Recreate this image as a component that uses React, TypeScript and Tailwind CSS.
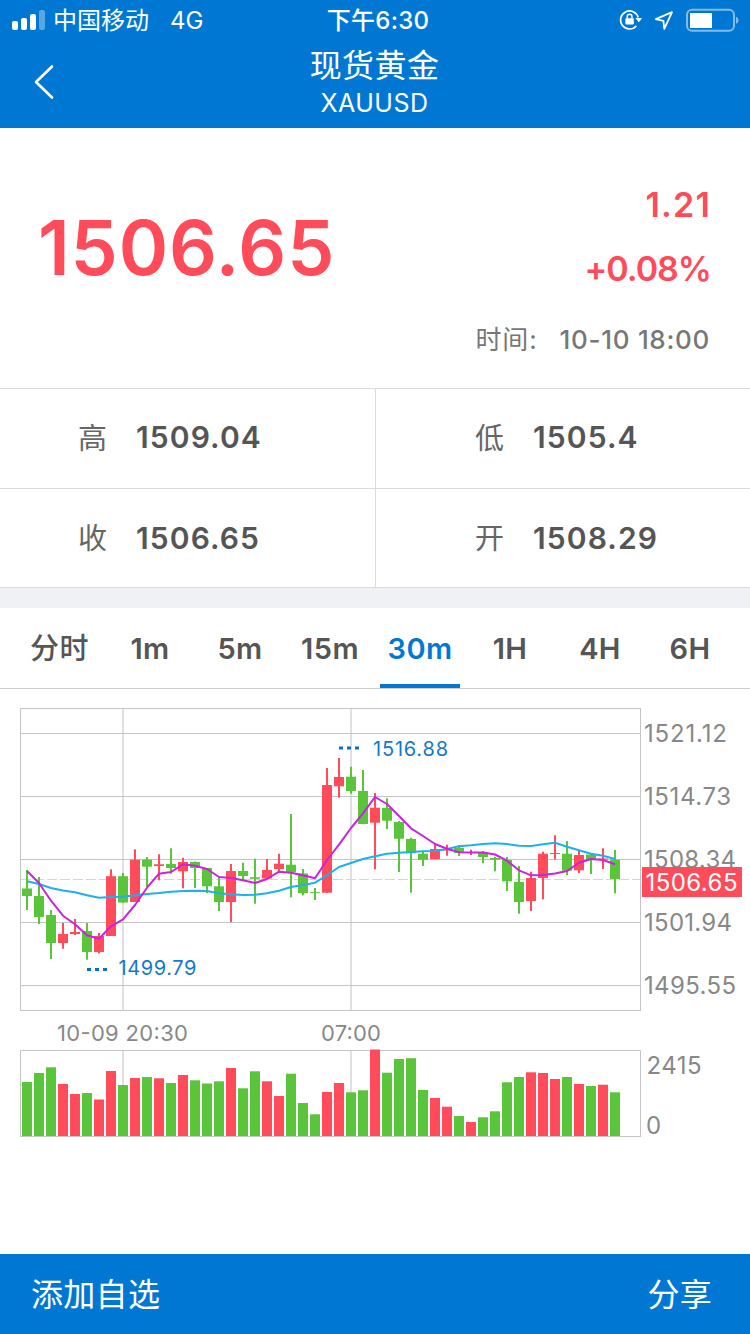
import clsx from 'clsx';

type Candle = {
  up: boolean;
  high: number;
  low: number;
  top: number;
  bottom: number;
  vol: number;
};

// [up, wick top, wick bottom, body top, body bottom, volume top]
const RAW: [number, number, number, number, number, number][] = [
  [0, 870, 910, 888.5, 896, 1082],
  [0, 877, 924, 896, 917, 1073],
  [0, 910, 959, 915, 943, 1067.3],
  [1, 923, 948.7, 934, 943, 1084],
  [1, 919, 935, 932, 934, 1094],
  [0, 923, 959.7, 931, 952, 1093],
  [1, 933, 953.3, 936, 952, 1099.5],
  [1, 869.3, 936, 876.2, 936, 1071],
  [0, 873, 903, 876.2, 902.5, 1085],
  [1, 849.3, 902, 859.7, 902, 1078],
  [0, 857, 887, 859.7, 866.7, 1077],
  [1, 854.3, 880.3, 864.3, 866, 1078.3],
  [0, 848.3, 873.7, 864, 868, 1083],
  [1, 857.7, 888.3, 862, 871.3, 1075],
  [0, 861.5, 888, 862, 868, 1080.3],
  [0, 868, 893, 868, 886.3, 1083.5],
  [0, 877.5, 911, 886.3, 902, 1081.3],
  [1, 864, 922, 871, 902, 1068],
  [0, 862.7, 881, 871, 876, 1088.3],
  [0, 858.7, 903.7, 877.2, 878.8, 1071.3],
  [1, 859, 879, 870, 878.5, 1081.3],
  [1, 853.7, 871, 863.7, 869, 1096],
  [0, 814, 897.3, 864.7, 872.3, 1073.7],
  [0, 869, 895.3, 873.5, 893, 1103],
  [0, 888, 900, 892, 892.8, 1114.3],
  [1, 768, 892.7, 785, 892.7, 1092],
  [1, 758, 797.7, 777, 786.3, 1083],
  [0, 766.7, 793.7, 776.7, 791, 1092.3],
  [0, 770, 824, 791, 824, 1090.3],
  [1, 793, 869.3, 807.7, 822.7, 1049.5],
  [0, 798.3, 829, 808, 820.7, 1072.7],
  [0, 821, 872, 822, 838.7, 1059],
  [0, 837.7, 892.7, 839, 853.3, 1058.2],
  [0, 850.7, 866, 853.7, 859.7, 1090],
  [1, 843.3, 859, 849, 859, 1098],
  [1, 844.7, 855.7, 849.5, 850.5, 1106.7],
  [0, 845.3, 856, 848, 853, 1116],
  [1, 849.7, 855, 852, 853, 1122],
  [0, 851, 863.3, 852.3, 857, 1117.3],
  [0, 857, 871.3, 858, 859.7, 1111.3],
  [0, 857, 891, 860, 881.3, 1082.3],
  [0, 866, 913.7, 882, 902, 1077],
  [1, 871.7, 911, 878, 901, 1072.3],
  [1, 851.7, 899.3, 853.7, 878, 1073],
  [1, 835.3, 859.3, 853, 854, 1079],
  [0, 841, 875, 853.7, 870.7, 1077],
  [1, 850, 873, 855, 870.3, 1084],
  [0, 853, 874, 854.5, 859.7, 1086],
  [1, 848.3, 869, 858.5, 859.5, 1084.7],
  [0, 850, 893.3, 859.7, 879, 1092.3],
];

const CANDLES: Candle[] = RAW.map(([up, high, low, top, bottom, vol]) => ({
  up: up === 1,
  high,
  low,
  top,
  bottom,
  vol,
}));

const MA_FAST = [
  871, 883, 900.7, 915.7, 924.3, 935.3, 938.7, 926.3, 919.3, 905, 887.7, 873.7, 872, 864.3, 865.7, 869, 877,
  878, 880.3, 883, 879, 871.7, 872.7, 875.3, 878.3, 860, 844.7, 828, 813.3, 797, 804, 816, 828.3, 836, 844,
  848.7, 852.3, 852.5, 852.5, 854.5, 860.7, 870.3, 875.3, 875, 873.5, 871, 862.7, 859, 860, 864.3,
];

const MA_SLOW = [
  881.3, 884, 888, 890.5, 892.3, 895.3, 897.7, 897, 896.7, 895.3, 894, 893, 891.7, 891, 890.7, 891, 893.3,
  894.3, 895, 894.7, 893.3, 890.7, 887, 885, 882.7, 875.3, 867, 863, 859, 856.3, 853.7, 852.7, 852, 851.3,
  851, 849, 846.3, 845.3, 844, 843.3, 844, 845.7, 846, 844.3, 842.7, 846.7, 850.3, 853.7, 855.7, 859,
];

const PRICE_TICKS = [
  { y: 733.5, label: '1521.12', width: 83 },
  { y: 796.5, label: '1514.73', width: 87 },
  { y: 859.5, label: '1508.34', width: 92 },
  { y: 922.5, label: '1501.94', width: 88 },
  { y: 985.5, label: '1495.55', width: 92 },
];

const TABS = ['分时', '1m', '5m', '15m', '30m', '1H', '4H', '6H'];

const STATS = [
  { label: '高', value: '1509.04' },
  { label: '低', value: '1505.4' },
  { label: '收', value: '1506.65' },
  { label: '开', value: '1508.29' },
];

const candleX = (i: number) => 27 + i * 12;
const toPoints = (ys: number[]) => ys.map((y, i) => `${candleX(i)},${y}`).join(' ');

function StatusBar() {
  return (
    <div className="flex h-10 items-center justify-between">
      <div className="flex w-[300px] items-center pl-3">
        <svg width="34" height="20" viewBox="0 0 34 20" fill="#fff">
          <rect x="0" y="11" width="6" height="9" rx="2" />
          <rect x="9" y="8" width="6" height="12" rx="2" />
          <rect x="18" y="4" width="6" height="16" rx="2" />
          <rect x="27" y="0" width="6" height="20" rx="2" opacity="0.35" />
        </svg>
        <span className="ml-[7px] pt-0.5 text-[24px]">中国移动</span>
        <span className="ml-[21px] pt-0.5 text-[24px]">4G</span>
      </div>
      <span className="pl-[6px] pt-0.5 text-[24px] font-medium tracking-[0.3px]">下午6:30</span>
      <div className="flex w-[300px] items-center justify-end pr-[10px]">
        <svg width="24" height="22" viewBox="0 0 24 22" fill="none" stroke="#fff" strokeWidth="1.7">
          <path d="M17.3 17A9 9 0 1 1 19.2 8.4" />
          <path d="M16.4 9h6.8l-3.4 4.2z" fill="#fff" stroke="none" />
          <rect x="6.4" y="9.2" width="8.4" height="6.2" rx="0.8" fill="#fff" stroke="none" />
          <path d="M8.2 9.5V7.7a2.4 2.4 0 0 1 4.8 0v1.8" strokeWidth="1.4" />
        </svg>
        <svg className="ml-[11px]" width="20" height="20" viewBox="0 0 20 20" fill="none" stroke="#fff" strokeWidth="1.8" strokeLinejoin="round">
          <path d="M18 2.2 1.8 9.2l7.6 1.6.9 8z" />
        </svg>
        <svg className="ml-[12px]" width="54" height="24" viewBox="0 0 54 24">
          <rect x="1" y="1.7" width="47" height="21" rx="5" fill="none" stroke="#fff" strokeOpacity="0.5" strokeWidth="2" />
          <rect x="4" y="5" width="22" height="15" fill="#fff" />
          <path d="M50 8.8c3.4 1 3.4 6 0 7z" fill="#fff" opacity="0.5" />
        </svg>
      </div>
    </div>
  );
}

function Header() {
  return (
    <header className="h-32 bg-[#0078d3] text-white">
      <StatusBar />
      <div className="flex h-[84px] items-center">
        <svg className="ml-[33px]" width="22" height="36" viewBox="0 0 22 36" fill="none" stroke="#fff" strokeWidth="2.6" strokeLinecap="round" strokeLinejoin="round">
          <path d="M19 2.5 3 18l16 15.5" />
        </svg>
        <div className="mr-[56px] flex flex-1 flex-col items-center pb-1">
          <h1 className="text-[32px] leading-[46px] tracking-[0.4px]">现货黄金</h1>
          <span className="text-[25px] leading-[29px] tracking-[0.5px]">XAUUSD</span>
        </div>
      </div>
    </header>
  );
}

function Quote() {
  return (
    <section className="flex h-[260px] justify-between pl-[38px] pr-[39px]">
      <div className="pt-[75px] text-[75px] font-semibold leading-[90px] tracking-[0.9px] text-[#ff4b5a]">1506.65</div>
      <div className="flex flex-col items-end pt-[56px]">
        <span className="text-[34px] font-semibold leading-[42px] tracking-[1.2px] text-[#ff4b5a]">1.21</span>
        <span className="mt-[22px] text-[34px] font-semibold leading-[42px] tracking-[-1px] text-[#ff4b5a]">+0.08%</span>
        <div className="mt-[32px] flex pr-px text-[26px] leading-[36px] text-[#777]">
          <span className="tracking-[0.9px]">时间:</span>
          <span className="ml-[22px] font-medium tracking-[0.7px]">10-10 18:00</span>
        </div>
      </div>
    </section>
  );
}

function Stats() {
  return (
    <section className="grid h-[200px] grid-cols-2 grid-rows-[100px_98px] border-y border-[#d9dbe0]">
      {STATS.map((s, i) => (
        <div
          key={s.label}
          className={clsx(
            'flex items-center border-[#d9dbe0]',
            i % 2 === 0 ? 'pl-[78px]' : 'border-l pl-[99px]',
            i < 2 && 'border-b pb-0.5',
          )}
        >
          <span className="w-[58px] pt-0.5 text-[29px] text-[#666]">{s.label}</span>
          <span className="text-[30px] font-semibold tracking-[1.1px] text-[#555]">{s.value}</span>
        </div>
      ))}
    </section>
  );
}

function PeriodTabs() {
  return (
    <nav className="flex h-[81px] border-b border-[#ccc] px-[15px]">
      {TABS.map(tab => {
        const active = tab === '30m';
        return (
          <div
            key={tab}
            className={clsx(
              'flex w-[90px] flex-col items-center text-[29px] tracking-[0.4px]',
              active ? 'text-[#0078d3]' : 'text-[#555]',
              tab === '分时' ? 'pr-px font-medium' : 'font-semibold',
            )}
          >
            <span className="h-[76px] leading-[82px]">{tab}</span>
            {active && <span className="h-1 w-20 bg-[#0078d3]" />}
          </div>
        );
      })}
    </nav>
  );
}

function Chart() {
  return (
    <svg className="block" width="750" height="565" viewBox="0 689 750 565">
      {/* grid */}
      <path d="M123 709V1010M351 709V1010M123 1051V1136M351 1051V1136" stroke="#e0e0e2" strokeWidth="2" />
      <g fill="none" stroke="#c4c4c6" strokeWidth="1">
        <rect x="20.5" y="708.5" width="620" height="302" />
        {PRICE_TICKS.map(t => (
          <path key={t.label} d={`M20 ${t.y}H641`} />
        ))}
        <path d="M20.5 1136V1050.5H640.5V1136" />
      </g>
      <path d="M21 879.5H640" stroke="#b8e0ef" strokeWidth="1" strokeDasharray="10 3" />

      {CANDLES.map((c, i) => (
        <g key={i} fill={c.up ? '#ff4b5a' : '#5ac43b'}>
          <rect x={candleX(i) - 1} y={c.high} width="2" height={c.low - c.high} />
          <rect x={candleX(i) - 5} y={c.top} width="10" height={c.bottom - c.top} />
          <rect x={candleX(i) - 5} y={c.vol} width="10" height={1136 - c.vol} />
        </g>
      ))}
      <path d="M20 1136.5H641" stroke="#c4c4c6" />

      <g fill="none" strokeWidth="2" strokeLinejoin="round">
        <polyline points={toPoints(MA_SLOW)} stroke="#1eb0ee" />
        <polyline points={toPoints(MA_FAST)} stroke="#cc22e0" />
      </g>

      {/* high / low markers */}
      <g stroke="#0a6fc0" strokeWidth="3" strokeDasharray="4 4">
        <path d="M339 748H360" />
        <path d="M87 969.5H108" />
      </g>
      <g fill="#1478cc" fontSize="20">
        <text x="373" y="756" textLength="75">1516.88</text>
        <text x="118.5" y="975" textLength="78">1499.79</text>
      </g>

      <g fill="#888" fontSize="24">
        {PRICE_TICKS.map(t => (
          <text key={t.label} x="644" y={t.y + 8} textLength={t.width}>
            {t.label}
          </text>
        ))}
        <text x="646.5" y="1074" textLength="55">2415</text>
        <text x="646" y="1134">0</text>
        <text x="57" y="1041" fontSize="22" textLength="131">10-09 20:30</text>
        <text x="321" y="1041" fontSize="22" textLength="60">07:00</text>
      </g>
      <rect x="642" y="867" width="100" height="30" fill="#ff4b5a" />
      <text x="645.5" y="891" fontSize="24" fill="#fff" textLength="92">1506.65</text>
    </svg>
  );
}

export default function App() {
  return (
    <div className="flex h-[1334px] w-[750px] flex-col overflow-hidden bg-white font-['Inter','Noto_Sans_CJK_SC',sans-serif]">
      <Header />
      <Quote />
      <Stats />
      <div className="h-5 bg-[#eff1f5]" />
      <PeriodTabs />
      <Chart />
      <footer className="flex h-20 items-center justify-between bg-[#0078d3] pl-[31px] pr-[38px] pt-px text-[32px] tracking-[0.3px] text-white">
        <span>添加自选</span>
        <span>分享</span>
      </footer>
    </div>
  );
}
